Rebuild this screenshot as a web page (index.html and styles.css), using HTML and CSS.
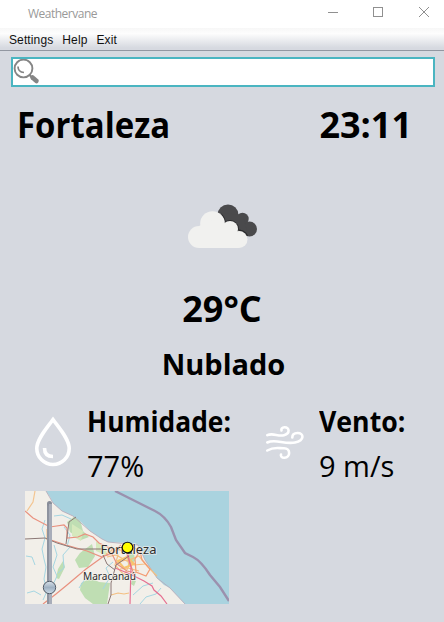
FILE: index.html
```html
<!DOCTYPE html>
<html lang="pt">
<head>
<meta charset="utf-8">
<title>Weathervane</title>
<link rel="stylesheet" href="styles.css">
</head>
<body>
<header class="titlebar">
  <span class="title">Weathervane</span>
  <svg class="controls" width="104" height="14" viewBox="0 0 104 14" fill="none" stroke="#909090">
    <path d="M0 5.500h10M45.500.5h9v9h-9z" transform="translate(0 1)" shape-rendering="crispEdges"/>
    <path d="M91 1l10 10M101 1l-10 10"/>
  </svg>
</header>
<nav class="menubar"><span>Settings</span><span>Help</span><span>Exit</span></nav>
<div class="search">
  <svg width="28" height="28" viewBox="0 0 28 28" fill="none" stroke="#858585">
    <circle cx="10.500" cy="9.500" r="8.900" stroke-width="1.900"/>
    <path d="M5 7.500Q5 13 11 13.500" stroke-width="1.700"/>
    <path d="M16.500 16l3 3" stroke-width="2"/>
    <path d="M19.500 18.500l4 3.500" stroke-width="4.500" stroke-linecap="round"/>
  </svg>
</div>
<main>
  <div class="heading"><h1 class="city">Fortaleza</h1><h1 class="time">23:11</h1></div>
  <div class="sky">
    <svg width="72" height="46" viewBox="187 203 72 46">
      <g fill="#4a4a4c"><circle cx="228" cy="215" r="10.500"/><circle cx="242.500" cy="219" r="6.200"/><circle cx="249.500" cy="229" r="7.500"/><path d="M221 213l22 2 5 21-12-1z"/></g>
      <g fill="#f1f1ef" stroke="#2c2c2e" stroke-width="2"><circle cx="212.500" cy="223.500" r="12.300" clip-path="url(#edge)"/><circle cx="230" cy="229" r="8" clip-path="url(#edge)"/><circle cx="239" cy="239" r="8.500" clip-path="url(#edge)"/></g>
      <g fill="#f1f1ef"><circle cx="199" cy="237" r="11"/><circle cx="212.500" cy="223.500" r="12.300"/><circle cx="230" cy="229" r="8"/><circle cx="239" cy="239.500" r="8.500"/><path d="M199 226l12-6 22 6 6 22h-40z"/></g>
      <defs><clipPath id="edge"><path d="M217 205l32 8 5 23h-11l-7-9-11-5z"/></clipPath></defs>
    </svg>
  </div>
  <h1 class="temp">29°C</h1>
  <h2 class="condition">Nublado</h2>
  <div class="stats">
    <svg class="drop" width="38" height="52" viewBox="34 415 38 52" fill="none" stroke="#fff" stroke-width="3.600">
      <path d="M53 419.500C47 428 36.800 439 36.800 448.500a16.200 16 0 0 0 32.400 0C69.200 439 59 428 53 419.500z"/>
      <path d="M44.500 448q0 8.500 8.500 8.500"/>
    </svg>
    <div class="stat"><h2 class="hum">Humidade:</h2><p class="humv">77%</p></div>
    <svg class="wind" width="40" height="36" viewBox="265 425 40 36" fill="none" stroke="#fff" stroke-width="2.600" stroke-linecap="round">
      <path d="M267.300 435.200C273 432.500 278 436.800 284 435.200 290.500 433.500 289.500 427 284.500 427.200 282 427.300 281 429 281.500 430.500"/>
      <path d="M267.300 442.500C275 438.500 284 444.500 295 442.500 305 440.500 304 432.800 297.500 433 294 433.100 292.300 435 292.300 437.500"/>
      <path d="M267.300 450.500C274 446.500 279 448.500 284 448.300 291 448.300 290.500 457.500 284.500 457.800 281.500 457.900 280.500 456 281 454.500"/>
    </svg>
    <div class="stat"><h2 class="wnd">Vento:</h2><p class="wndv">9 m/s</p></div>
  </div>
  <svg class="map" width="204" height="113" viewBox="0 0 204 113" fill="none">
    <path fill="#f2efe9" d="M0 0h204v113H0z"/>
    <g fill="#bfdeb3">
      <path d="M42 31l8-6 5 3 3 12 6 6-8 3-11-8zM55 62l12-9 3 12-7 11-9 1-4-8zM56 92l10-5 8 4 11 1-3 21H68l-8-6-5-8zM33 78l5-8 2 6-6 12-3-1zM102 60l7 2 1 8-7 5zM107 89l4 1-2 5-3-2z"/>
      <path fill="#d6e9bd" d="M47 33l11 7-2 10-9-5zM71 50l10 7 1 8-11-5z"/>
    </g>
    <path fill="#aad3df" d="M21 0L25 6 28 12 37 20 48 25 54 29 65 40 77 48 83 51 101 52 113 54 116 59 120 69 132 87 139 94 145 97 160 113H204V0z"/>
    <path d="M21 0L28 12 37 20 48 25 65 40 77 48 83 51 113 54 120 69 132 87 145 97 160 113" stroke="#b5a7b8" stroke-width=".8"/>
    <g stroke="#a5d6e2" stroke-width="1">
      <path d="M29 25l8-1 9 4M20 29l-3 9 3 9-3 11 2 10 2 8-2 12 3 12-4 9M29 54l3 10-4 12 4 9-6 13M1 65l6 1 3 8M2 102l7-2 7 4M33 82l6-5-1-13 7-8M39 36l6 8-3 12M54 97l6-9 8-2M115 113l6-7 10-3 5-6M108 104l10-9 10-3M88 71l-7 6 4 9-7 12"/>
    </g>
    <g stroke="#e9917f" stroke-width="1.200">
      <path stroke="#f4c591" d="M10 0L8 11 2 20M22 38v11"/>
      <path d="M0 20l8 7 17 9 14-2 3 3 0 10 11-1 7-3 8 3 6 6 15 7"/>
      <path d="M23 48l18 6 21 6 15 6 18-8M79 65L61 78 42 94 31 103 18 113"/>
      <path stroke="#f4bf81" d="M81 63l10-6 8 4 7-5 9 3M82 66l9-2 11 6 12-5 9 11 9 9M86 55l7 9-3 10 9 10 5-9-3-18M91 72l10-3 8 5 11-1M88 62l9-6 8 7M95 78l8-1 11 3M86 104l7-2 6 1 5-1"/>
      <path stroke="#f8c36d" stroke-width="2" d="M93 70l9-4 7 7-10 4z"/>
      <path d="M78 65l9-2 9-9M87 63l5 10 10 7 9 2M103 59l1 10 5 15"/>
      <path d="M115 60l2 9 8 9-4 7-10-4-1-13z" stroke="#f39b72"/>
      <path d="M102 62l4 14-1 37M90 77l15 6 14 7 8 5 2 4 7 6 6 8" stroke="#e66f91"/>
    </g>
    <path d="M0 48l20-1 12 5 20 6h26M41 53l3-22 7-5M78 64l4 9 8 6M104 65l-13 9-5 18v12l-3 9" stroke="#8b7775" stroke-width="1"/>
    <path d="M90 0L112 11 130 20Q140 25 146 36L151 49 160 62 168 66Q176 70 185 84L195 96 204 110" stroke="#9b91ae" stroke-width="2.400"/>
    <g class="place" fill="#2c2c2c" stroke="#f7f4ef" stroke-opacity=".7" stroke-width="1.600" paint-order="stroke">
      <text x="75.500" y="63" font-size="12.500" textLength="56" lengthAdjust="spacingAndGlyphs">Fortaleza</text>
      <text x="58" y="89" font-size="10.200" textLength="53" lengthAdjust="spacingAndGlyphs">Maracanaú</text>
    </g>
    <circle cx="102.500" cy="56.500" r="5.300" fill="#ff0" stroke="#111" stroke-width="1.100"/>
    <path d="M24.500 12.500V113" stroke="#8e939f" stroke-width="5"/>
    <circle cx="24.500" cy="12.500" r="2.500" fill="#888d99"/>
    <path d="M25.500 13V113" stroke="#a8adb9" stroke-width="3"/>
    <circle cx="24.500" cy="96.500" r="6.200" fill="url(#knob)" stroke="#525c68" stroke-width="1"/>
    <defs><linearGradient id="knob" x2="0" y2="1"><stop stop-color="#d9e2ea"/><stop offset=".5" stop-color="#9fb1c2"/><stop offset="1" stop-color="#cddce8"/></linearGradient></defs>
  </svg>
</main>
</body>
</html>
```
FILE: styles.css
```css
* { box-sizing: border-box; }
body { margin: 0; height: 622px; overflow: hidden; background: #d6d9e0; color: #000; font-family: "Open Sans", "Noto Sans", sans-serif; }
h1, h2, p { margin: 0; white-space: nowrap; transform-origin: left; }
svg { display: block; flex: none; }
.titlebar { display: flex; align-items: center; height: 28px; padding: 0 14px 2px 28px; background: #fff; }
.title { flex: 1; font-size: 12px; letter-spacing: -0.5px; color: #999; }
.controls { margin: 0 -2px 0 0; }
.menubar { display: flex; gap: 9px; height: 23px; padding: 4px 9px 0; border-bottom: 1px solid #9297a1; background: linear-gradient(#f7f7f7, #fdfdfd 25%, #d6d9e0 90%); font: 12px/16px "Liberation Sans", sans-serif; letter-spacing: 0.12px; color: #111; }
.search { height: 30px; margin: 6px 9px 0 11px; border: 2px solid #4ab5c1; background: #fff; }
.heading { display: flex; justify-content: space-between; padding: 14px 32px 0 17px; }
h1 { font-size: 36px; line-height: 48px; }
h2 { font-size: 29px; line-height: 40px; }
p { font-size: 29px; line-height: 40px; }
.city { transform: scaleX(0.915); }
.sky { display: flex; justify-content: center; padding: 54px 0 0 2px; }
.temp { margin-top: 36px; text-align: center; }
.condition { margin-top: 11px; padding-left: 3px; text-align: center; }
.stats { display: flex; height: 107px; padding: 17px 0 0 34px; }
.drop { margin-top: 14px; }
.stat { display: flex; flex: none; flex-direction: column; gap: 5px; width: 110px; margin-left: 14px; }
.hum { transform: scaleX(0.91); }
.wnd { transform: scaleX(0.92); }
.wind { margin: 24px 0 0 1px; }
.drop + .stat { width: 177px; margin-left: 15px; }
.map { margin-left: 25px; }
.place { font-family: "Noto Sans", sans-serif; }
```
